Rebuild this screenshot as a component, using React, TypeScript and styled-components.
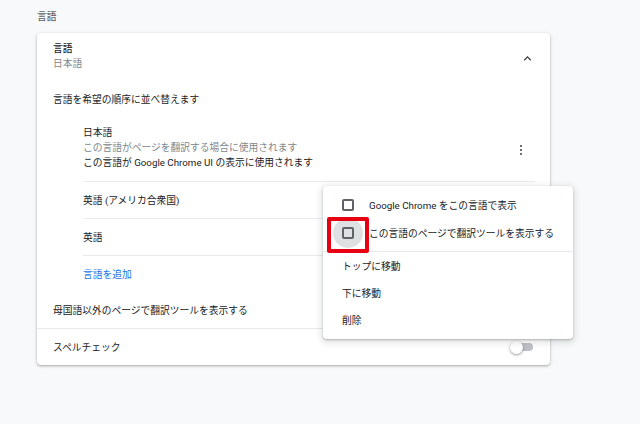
import styled, { createGlobalStyle } from "styled-components";

const GlobalStyle = createGlobalStyle`
  body {
    margin: 0;
    background-color: #f8f9fa;
    font-family: Roboto, "Noto Sans CJK JP", sans-serif;
    font-size: 9.75px;
    color: #202124;
  }
`;

const listItems = ["英語 (アメリカ合衆国)", "英語"];

const menuChecks = [
  { label: "Google Chrome をこの言語で表示", focused: false },
  { label: "この言語のページで翻訳ツールを表示する", focused: true },
];

const menuActions = ["トップに移動", "下に移動", "削除"];

const App = () => {
  return (
    <Page>
      <GlobalStyle />
      <PageTitle>言語</PageTitle>
      <Card>
        <Header>
          <Col>
            <Line $strong>言語</Line>
            <Line $muted>日本語</Line>
          </Col>
          <IconButton>
            <svg width="15" height="15" viewBox="0 0 24 24">
              <path
                d="M7.41 15.41 12 10.83l4.59 4.58L18 14l-6-6-6 6z"
                fill="#3c4043"
              />
            </svg>
          </IconButton>
        </Header>
        <SectionLabel>言語を希望の順序に並べ替えます</SectionLabel>
        <LangList>
          <LangItem $tall>
            <Col>
              <Line>日本語</Line>
              <Line $muted>この言語がページを翻訳する場合に使用されます</Line>
              <Line>この言語が Google Chrome UI の表示に使用されます</Line>
            </Col>
            <Kebab>
              <Dot />
              <Dot />
              <Dot />
            </Kebab>
          </LangItem>
          {listItems.map((name) => (
            <LangItem key={name}>
              <Line>{name}</Line>
            </LangItem>
          ))}
          <LangItem>
            <LinkText>言語を追加</LinkText>
          </LangItem>
        </LangList>
        <SettingRow>
          <Line>母国語以外のページで翻訳ツールを表示する</Line>
        </SettingRow>
        <SettingRow $divided>
          <Line>スペルチェック</Line>
          <Toggle>
            <Knob />
          </Toggle>
        </SettingRow>
      </Card>

      <Menu>
        {menuChecks.map((item) => (
          <CheckItem key={item.label}>
            <Checkbox $focused={item.focused} />
            <span>{item.label}</span>
            {item.focused && <Highlight />}
          </CheckItem>
        ))}
        <MenuDivider />
        {menuActions.map((label) => (
          <MenuItem key={label}>{label}</MenuItem>
        ))}
      </Menu>
    </Page>
  );
};

const Page = styled.div`
  position: relative;
  width: 640px;
  height: 424px;
  overflow: hidden;
  padding-left: 37px;
  box-sizing: border-box;
`;

const PageTitle = styled.div`
  height: 33px;
  display: flex;
  align-items: center;
  padding-bottom: 2px;
  box-sizing: border-box;
  color: #5f6368;
  font-weight: 500;
`;

const Card = styled.div`
  width: 513px;
  background-color: #ffffff;
  border-radius: 4px;
  box-shadow: 0 1px 2px rgba(60, 64, 67, 0.3),
    0 1px 3px 1px rgba(60, 64, 67, 0.12);
`;

const Header = styled.div`
  height: 48px;
  padding: 8px 16px 0 16px;
  box-sizing: border-box;
  display: flex;
  justify-content: space-between;
  align-items: flex-start;
`;

const Col = styled.div`
  display: flex;
  flex-direction: column;
`;

const Line = styled.div<{ $muted?: boolean; $strong?: boolean }>`
  line-height: 15px;
  white-space: nowrap;
  color: ${({ $muted }) => ($muted ? "#80868b" : "#202124")};
  font-weight: ${({ $strong }) => ($strong ? 500 : 400)};
`;

const IconButton = styled.div`
  width: 24px;
  height: 24px;
  margin: 5px -5px 0 0;
  display: flex;
  align-items: center;
  justify-content: center;
`;

const SectionLabel = styled.div`
  height: 36px;
  padding: 0 16px;
  display: flex;
  align-items: center;
`;

const LangList = styled.div`
  margin: 0 15px 0 46px;
`;

const LangItem = styled.div<{ $tall?: boolean }>`
  display: flex;
  align-items: ${({ $tall }) => ($tall ? "flex-start" : "center")};
  justify-content: space-between;
  height: ${({ $tall }) => ($tall ? "56px" : "36px")};
  padding-top: ${({ $tall }) => ($tall ? "8px" : "0")};
  & + & {
    border-top: 1px solid #e8eaed;
  }
`;

const Kebab = styled.div`
  align-self: center;
  width: 28px;
  display: flex;
  flex-direction: column;
  align-items: center;
  gap: 1.5px;
  margin-top: -6px;
`;

const Dot = styled.span`
  width: 2.5px;
  height: 2.5px;
  border-radius: 50%;
  background-color: #3c4043;
`;

const LinkText = styled.div`
  color: #1a73e8;
`;

const SettingRow = styled.div<{ $divided?: boolean }>`
  height: 36px;
  padding: 0 16px;
  display: flex;
  align-items: center;
  justify-content: space-between;
  border-top: ${({ $divided }) => ($divided ? "1px solid #e8eaed" : "none")};
`;

const Toggle = styled.div`
  position: relative;
  width: 20px;
  height: 8px;
  margin-right: 1px;
  border-radius: 4px;
  background-color: #bdc1c6;
`;

const Knob = styled.span`
  position: absolute;
  left: -3px;
  top: -2.5px;
  width: 13px;
  height: 13px;
  border-radius: 50%;
  background-color: #ffffff;
  box-shadow: 0 1px 3px rgba(0, 0, 0, 0.4);
`;

const Menu = styled.div`
  position: absolute;
  left: 323px;
  top: 186px;
  width: 250px;
  padding: 5px 0 6px 0;
  box-sizing: border-box;
  background-color: #ffffff;
  border-radius: 4px;
  box-shadow: 0 2px 6px 2px rgba(60, 64, 67, 0.15),
    0 1px 2px rgba(60, 64, 67, 0.3);
`;

const CheckItem = styled.div`
  position: relative;
  isolation: isolate;
  height: 28px;
  padding-left: 19px;
  display: flex;
  align-items: center;
  gap: 15px;
  white-space: nowrap;
`;

const Checkbox = styled.span<{ $focused?: boolean }>`
  position: relative;
  width: 12px;
  height: 12px;
  border: 2px solid #5f6368;
  border-radius: 2px;
  box-sizing: border-box;
  flex-shrink: 0;
  &::before {
    content: "";
    display: ${({ $focused }) => ($focused ? "block" : "none")};
    position: absolute;
    left: -11px;
    top: -11px;
    width: 30px;
    height: 30px;
    border-radius: 50%;
    background-color: rgba(95, 99, 104, 0.2);
    z-index: -1;
  }
`;

const Highlight = styled.span`
  position: absolute;
  left: 4px;
  top: -2px;
  width: 42px;
  height: 36px;
  border: 4px solid #e60012;
  border-radius: 2px;
  box-sizing: border-box;
`;

const MenuDivider = styled.div`
  height: 1px;
  margin: 4px 0 0 0;
  background-color: #e8eaed;
`;

const MenuItem = styled.div`
  height: 27px;
  padding-left: 19px;
  display: flex;
  align-items: center;
`;

export default App;
